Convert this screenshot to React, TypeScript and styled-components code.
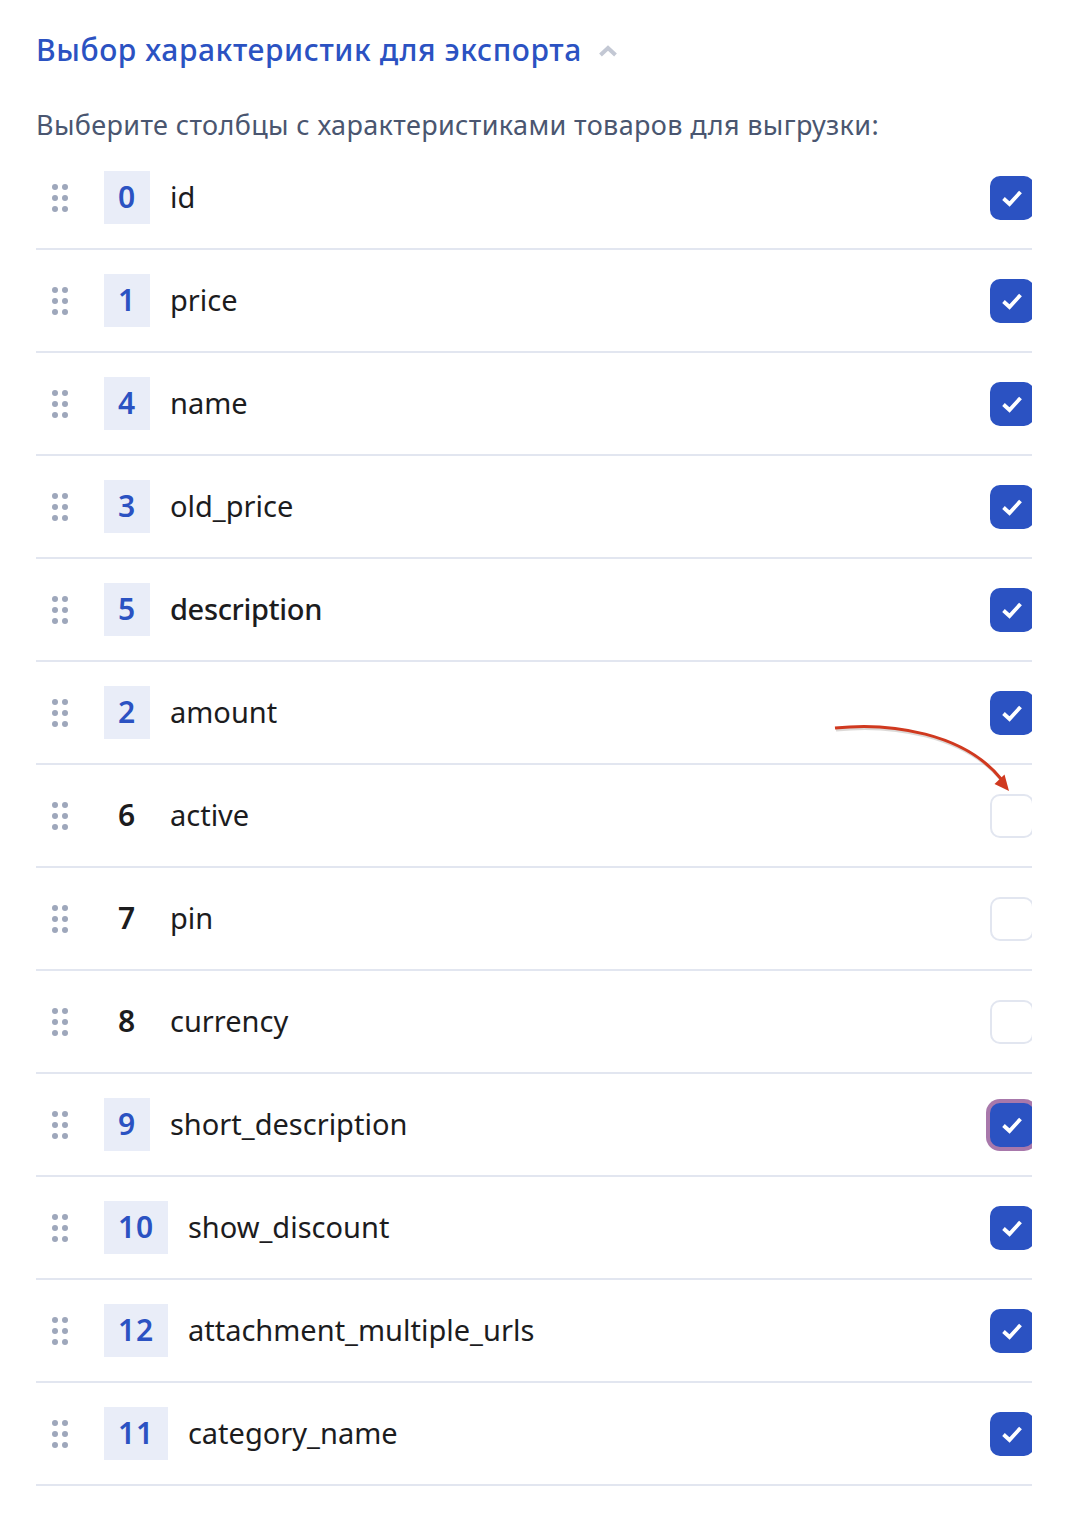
import styled, { createGlobalStyle } from "styled-components";

const GlobalStyle = createGlobalStyle`
  html, body {
    margin: 0;
    padding: 0;
    background: #ffffff;
    font-family: "Noto Sans", sans-serif;
  }
`;

const Page = styled.div`
  position: relative;
  width: 1086px;
  height: 1516px;
  box-sizing: border-box;
  padding: 28px 54px 0 36px;
  overflow: hidden;
`;
const Header = styled.div`
  display: flex;
  align-items: center;
  gap: 16px;
  height: 46px;
`;
const Title = styled.h2`
  margin: 0 0 4px;
  font-size: 30px;
  font-weight: 500;
  letter-spacing: 0.6px;
  color: #2b52c2;
`;
const Hint = styled.p`
  margin: 32px 0 0;
  font-size: 27px;
  line-height: 37px;
  height: 41px;
  letter-spacing: 0.37px;
  color: #4a5670;
`;
const List = styled.div`
  display: flex;
  flex-direction: column;
`;
const Row = styled.div`
  display: flex;
  align-items: center;
  height: 101px;
  border-bottom: 2px solid #e2e6f0;
  overflow: hidden;
`;
const Handle = styled.div`
  display: grid;
  grid-template-columns: 6px 6px;
  gap: 5px 4px;
  margin: 0 36px 0 16px;
`;
const Dot = styled.span`
  width: 6px;
  height: 6px;
  border-radius: 50%;
  background: #9ea7bb;
`;
const Chip = styled.span<{ $active: boolean }>`
  display: flex;
  align-items: center;
  justify-content: center;
  box-sizing: border-box;
  height: 53px;
  padding: 0 14px 3px;
  font-size: 30px;
  font-weight: 600;
  letter-spacing: 0.8px;
  color: ${(p) => (p.$active ? "#2b52c2" : "#1c1c1e")};
  background: ${(p) => (p.$active ? "#e9edf8" : "transparent")};
`;
const Label = styled.span<{ $strong?: boolean }>`
  flex: 1;
  margin-left: 20px;
  padding-bottom: 3px;
  font-size: 29px;
  font-weight: ${(p) => (p.$strong ? 500 : 400)};
  letter-spacing: ${(p) => (p.$strong ? "-0.35px" : "0")};
  color: #1c1c1e;
`;
const Check = styled.span<{ $on: boolean; $focus?: boolean }>`
  flex: none;
  display: flex;
  align-items: center;
  justify-content: center;
  box-sizing: border-box;
  width: 44px;
  height: 44px;
  margin-right: -2px;
  border-radius: 10px;
  border: ${(p) => (p.$on ? "none" : "2px solid #e2e6f0")};
  background: ${(p) => (p.$on ? "#2b52c2" : "#ffffff")};
  box-shadow: ${(p) => (p.$focus ? "0 0 0 4px #a878ab" : "none")};
  svg {
    width: 24px;
    height: 24px;
  }
`;
const Arrow = styled.svg`
  position: absolute;
  left: 0;
  top: 0;
  pointer-events: none;
`;

const rows = [
  { n: 0, name: "id", on: true },
  { n: 1, name: "price", on: true },
  { n: 4, name: "name", on: true },
  { n: 3, name: "old_price", on: true },
  { n: 5, name: "description", on: true, strong: true },
  { n: 2, name: "amount", on: true },
  { n: 6, name: "active", on: false },
  { n: 7, name: "pin", on: false },
  { n: 8, name: "currency", on: false },
  { n: 9, name: "short_description", on: true, focus: true },
  { n: 10, name: "show_discount", on: true },
  { n: 12, name: "attachment_multiple_urls", on: true },
  { n: 11, name: "category_name", on: true },
];

function App() {
  return (
    <Page>
      <GlobalStyle />
      <Header>
        <Title>Выбор характеристик для экспорта</Title>
        <svg width="20" height="12" viewBox="0 0 20 12">
          <path d="M2.500 10 10 3l7.500 7" fill="none" stroke="#c3c8d4" strokeWidth="4" />
        </svg>
      </Header>
      <Hint>Выберите столбцы с характеристиками товаров для выгрузки:</Hint>
      <List>
        {rows.map((r) => (
          <Row key={r.n}>
            <Handle>
              {[0, 1, 2, 3, 4, 5].map((i) => (
                <Dot key={i} />
              ))}
            </Handle>
            <Chip $active={r.on}>{r.n}</Chip>
            <Label $strong={r.strong}>{r.name}</Label>
            <Check $on={r.on} $focus={r.focus}>
              {r.on && (
                <svg viewBox="0 0 24 24">
                  <path d="M3.500 12.500 9.500 18 20.500 6" fill="none" stroke="#ffffff" strokeWidth="3.8" />
                </svg>
              )}
            </Check>
          </Row>
        ))}
      </List>
      <Arrow width="1086" height="1516" viewBox="0 0 1086 1516">
        <path d="M835 728C890 722 965 733 1002 780" fill="none" stroke="#b9b4b0" strokeWidth="3" transform="translate(1 2)" opacity="0.5" />
        <path d="M835 728C890 722 965 733 1002 780" fill="none" stroke="#d0391f" strokeWidth="3" />
        <path d="M994.500 784 1004.500 774.500 1009 791Z" fill="#d0391f" />
      </Arrow>
    </Page>
  );
}

export default App;
